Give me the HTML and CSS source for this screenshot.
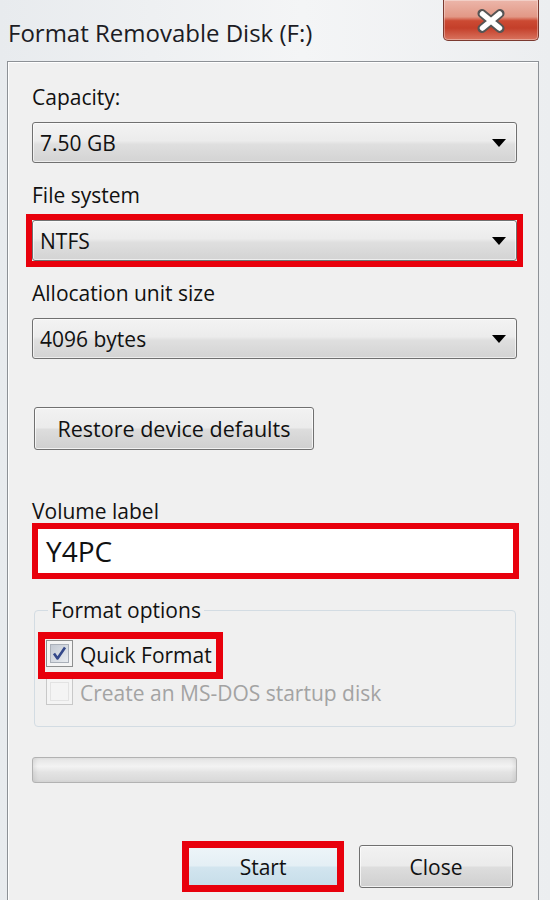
FILE: index.html
```html
<!DOCTYPE html>
<html>
<head>
<meta charset="utf-8">
<link rel="stylesheet" href="styles.css">
</head>
<body>
<div class="window">
  <div class="titlebar">
    <div class="title">Format Removable Disk (F:)</div>
    <div class="close-x">
      <svg width="30" height="24" viewBox="0 0 30 24">
        <path d="M6 4.5 L24 19.5 M24 4.5 L6 19.5" stroke="#555" stroke-width="9" stroke-linecap="round" fill="none"/>
        <path d="M6.5 5 L23.5 19 M23.5 5 L6.5 19" stroke="#ffffff" stroke-width="5.5" stroke-linecap="round" fill="none"/>
      </svg>
    </div>
  </div>
  <div class="panel">
    <div class="label">Capacity:</div>
    <div class="combo"><span>7.50 GB</span><i class="arrow"></i></div>
    <div class="label">File system</div>
    <div class="combo hl"><span>NTFS</span><i class="arrow"></i></div>
    <div class="label">Allocation unit size</div>
    <div class="combo"><span>4096 bytes</span><i class="arrow"></i></div>
    <div class="btn restore">Restore device defaults</div>
    <div class="label vol">Volume label</div>
    <div class="textbox hl">Y4PC</div>
    <fieldset class="group">
      <legend>Format options</legend>
      <div class="check-row hl">
        <span class="cb checked"><span class="cb-in">
          <svg width="19" height="19" viewBox="0 0 19 19"><path d="M4 9.5 L7.5 14.5 L15 3.5" stroke="#34488a" stroke-width="2.6" fill="none" stroke-linejoin="round"/></svg>
        </span></span>
        <span class="txt">Quick Format</span>
      </div>
      <div class="check-row disabled">
        <span class="cb"><span class="cb-in"></span></span>
        <span class="txt">Create an MS-DOS startup disk</span>
      </div>
    </fieldset>
    <div class="progress"></div>
    <div class="buttons">
      <div class="btn start hl">Start</div>
      <div class="btn">Close</div>
    </div>
  </div>
</div>
</body>
</html>
```
FILE: styles.css
```css
body {
  margin: 0;
  width: 550px;
  height: 900px;
  overflow: hidden;
  font-family: "Open Sans", "Noto Sans", sans-serif;
}

.window {
  width: 550px;
  height: 900px;
  display: flex;
  flex-direction: column;
  background: linear-gradient(to right, #e8ebee, #f4f5f6 55%, #eceef0);
}

.titlebar {
  height: 61px;
  flex: none;
  display: flex;
  justify-content: space-between;
  align-items: flex-start;
}

.title {
  margin: 18px 0 0 8px;
  font-size: 24px;
  line-height: 30px;
  color: #1c1c24;
}

.close-x {
  width: 96px;
  height: 41px;
  box-sizing: border-box;
  margin-right: 11px;
  border: 1px solid #7b3a30;
  border-top: none;
  border-radius: 0 0 5px 5px;
  background: linear-gradient(#ecb6aa 0%, #e29886 42%, #cc4a33 52%, #c43f2a 70%, #d9745f 100%);
  box-shadow: inset 0 0 0 1px rgba(255, 255, 255, 0.35);
  display: flex;
  align-items: center;
  justify-content: center;
  padding-top: 1px;
}

.panel {
  flex: 1;
  margin-left: 7px;
  width: 532px;
  box-sizing: border-box;
  border: 1px solid #8d9196;
  border-bottom: none;
  background: #f0f0f0;
  padding: 21px 21px 0 24px;
  box-shadow: inset 1px 1px 0 #ffffff;
}

.label {
  font-size: 21px;
  line-height: 28px;
  color: #111;
}

.combo {
  margin-top: 11px;
  height: 41px;
  box-sizing: border-box;
  border: 1px solid #707070;
  border-radius: 3px;
  background: linear-gradient(#f3f3f3, #ececec 45%, #dfdfdf 55%, #d3d3d3);
  box-shadow: inset 0 0 0 1px rgba(255, 255, 255, 0.6);
  display: flex;
  align-items: center;
  justify-content: space-between;
  padding: 0 10px 0 7px;
  font-size: 21px;
  color: #111;
}

.combo + .label {
  margin-top: 18px;
}

.arrow {
  width: 0;
  height: 0;
  border-left: 7px solid transparent;
  border-right: 7px solid transparent;
  border-top: 8px solid #000;
}

/* red annotation frames (square corners, drawn over the control) */
.hl {
  position: relative;
}

.hl::after {
  content: "";
  position: absolute;
  inset: -7px;
  border: 6px solid #e8000c;
  pointer-events: none;
}

.textbox.hl::after {
  inset: -6px;
}

.check-row.hl::after {
  inset: -7px;
  border-width: 7px;
}

.start.hl::after {
  inset: -5px;
  border-width: 7px;
}

.btn {
  height: 43px;
  box-sizing: border-box;
  border: 1px solid #707070;
  border-radius: 3px;
  background: linear-gradient(#f2f2f2, #ebebeb 48%, #dddddd 52%, #cfcfcf);
  box-shadow: inset 0 0 0 1px rgba(255, 255, 255, 0.7);
  display: flex;
  align-items: center;
  justify-content: center;
  font-size: 21px;
  color: #111;
}

.restore {
  margin: 48px 0 0 2px;
  width: 280px;
  font-size: 21.5px;
}

.vol {
  margin-top: 47px;
}

.textbox {
  margin: 4px 0 0 6px;
  width: 475px;
  height: 44px;
  box-sizing: border-box;
  background: #fff;
  padding-left: 8px;
  font-size: 28px;
  line-height: 44px;
  color: #111;
}

.group {
  margin: 23px 0 0 2px;
  width: 482px;
  min-width: 0;
  box-sizing: border-box;
  border: 1px solid #d3dce3;
  border-radius: 4px;
  padding: 15px 0 16px 0;
}

.group legend {
  margin-left: 13px;
  padding: 0 3px;
  font-size: 21px;
  line-height: 28px;
  color: #111;
}

.check-row {
  margin-left: 10px;
  width: 171px;
  height: 33px;
  box-sizing: border-box;
  display: flex;
  align-items: flex-start;
  gap: 7px;
  padding-left: 1px;
  font-size: 21px;
  line-height: 28px;
  color: #111;
  white-space: nowrap;
}

.check-row .cb {
  margin-top: 1px;
}

.check-row .txt {
  margin-top: 2px;
}

.check-row.disabled {
  margin-top: 5px;
  color: #a3a3a3;
}

.cb {
  flex: none;
  width: 27px;
  height: 27px;
  box-sizing: border-box;
  border: 1px solid #8e8f8f;
  background: #f4f4f4;
  padding: 3px;
}

.cb-in {
  display: block;
  width: 19px;
  height: 19px;
  box-sizing: border-box;
  border: 1px solid #aab0b9;
  background: linear-gradient(135deg, #c3c9d3, #e9ecf0);
}

.cb-in svg {
  display: block;
  margin: -1px;
}

.disabled .cb {
  border-color: #c8c8c8;
}

.disabled .cb-in {
  border-color: #e3e3e3;
  background: #f4f4f4;
}

.progress {
  margin-top: 30px;
  height: 26px;
  box-sizing: border-box;
  border: 1px solid #b2b2b2;
  border-radius: 3px;
  background: linear-gradient(#e4e4e4, #f3f3f3 35%, #e3e3e3 60%, #d8d8d8);
  box-shadow: inset 4px 0 4px -2px rgba(0, 0, 0, 0.08), inset -4px 0 4px -2px rgba(0, 0, 0, 0.08);
}

.buttons {
  margin-top: 62px;
  display: flex;
  justify-content: flex-end;
  gap: 19px;
  padding-right: 4px;
}

.buttons .btn {
  width: 154px;
}

.btn.start {
  border-color: #3c7fb1;
  background: linear-gradient(#eef5f9, #e4eff5 48%, #d2e5ef 52%, #c6dde9);
  box-shadow: inset 2px 0 0 #5fd0f2, inset -1px 0 0 #8fdcf3, inset 0 1px 0 #bfeafa;
}
```
